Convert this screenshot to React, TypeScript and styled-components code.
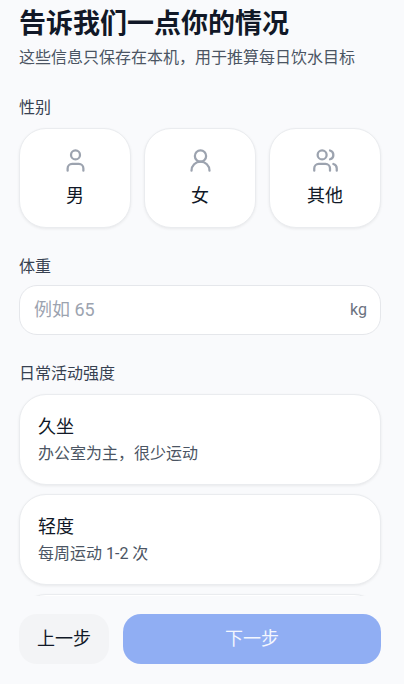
import React, { useState } from "react";
import styled, { createGlobalStyle } from "styled-components";
import { User, UserRound, Users } from "lucide-react";

const GlobalStyle = createGlobalStyle`
  * { box-sizing: border-box; }
  body {
    margin: 0;
    background: #f9fafc;
    color: #111827;
    font-family: Roboto, "Noto Sans CJK SC", sans-serif;
  }
  button, input { font-family: inherit; color: inherit; }
  h1, p, fieldset { margin: 0; padding: 0; border: 0; min-width: 0; }
`;

const Page = styled.div`
  display: flex;
  flex-direction: column;
  height: 100vh;
`;

const Content = styled.main`
  flex: 1;
  min-height: 0;
  overflow-y: auto;
  scrollbar-width: none;
  display: flex;
  flex-direction: column;
  gap: 28px;
  padding: 6px 23px 18px 19px;
`;

const Title = styled.h1`
  font-size: 27px;
  line-height: 36px;
  font-weight: 700;
`;

const Subtitle = styled.p`
  margin-top: 5px;
  font-size: 16px;
  line-height: 22px;
  color: #4b5563;
`;

const Caption = styled.legend`
  display: block;
  padding: 0;
  margin-bottom: 9px;
  font-size: 16px;
  line-height: 22px;
  color: #374151;
`;

const FieldLabel = styled.label`
  display: block;
  margin-bottom: 7px;
  font-size: 16px;
  line-height: 22px;
  color: #374151;
`;

const GenderGrid = styled.div`
  display: grid;
  grid-template-columns: repeat(3, 1fr);
  gap: 13px;
`;

const Card = styled.button<{ $selected: boolean }>`
  border: 1px solid ${(p) => (p.$selected ? "#2563eb" : "#eaecef")};
  border-radius: 27px;
  background: #fff;
  box-shadow: 0 1px 3px rgba(0, 0, 0, 0.07);
  padding: 18px;
  cursor: pointer;
`;

const GenderCard = styled(Card)`
  display: flex;
  flex-direction: column;
  align-items: center;
  gap: 9px;
  font-size: 18px;
  line-height: 26px;

  svg { color: #9ca3af; }
`;

const InputBox = styled.div`
  display: flex;
  align-items: center;
  height: 50px;
  padding: 0 13px 0 14px;
  border: 1px solid #e5e7eb;
  border-radius: 18px;
  background: #fff;
`;

const WeightInput = styled.input`
  flex: 1;
  min-width: 0;
  padding: 0;
  border: 0;
  outline: 0;
  background: transparent;
  font-size: 18px;
  line-height: 26px;

  &::placeholder { color: #9ca3af; opacity: 1; }
`;

const Unit = styled.span`
  font-size: 16px;
  line-height: 22px;
  color: #6b7280;
`;

const ActivityList = styled.div`
  display: flex;
  flex-direction: column;
  gap: 9px;
`;

const ActivityCard = styled(Card)`
  display: flex;
  flex-direction: column;
  gap: 2px;
  text-align: left;
`;

const ActivityName = styled.span`
  font-size: 18px;
  line-height: 27px;
`;

const ActivityNote = styled.span`
  font-size: 16px;
  line-height: 24px;
  color: #4b5563;
`;

const Footer = styled.footer`
  display: flex;
  gap: 14px;
  padding: 18px 23px 20px 19px;
`;

const ActionButton = styled.button<{ $primary?: boolean }>`
  flex: ${(p) => (p.$primary ? "1" : "none")};
  height: 50px;
  padding: 0 18px;
  border: 0;
  border-radius: 18px;
  font-size: 18px;
  line-height: 26px;
  background: ${(p) => (p.$primary ? "#90aef3" : "#f3f4f6")};
  color: ${(p) => (p.$primary ? "#f4f7fe" : "#111827")};
`;

const genders = [
  { name: "男", Icon: User },
  { name: "女", Icon: UserRound },
  { name: "其他", Icon: Users },
];

const activities = [
  { name: "久坐", note: "办公室为主，很少运动" },
  { name: "轻度", note: "每周运动 1-2 次" },
  { name: "中度", note: "每周运动 3-5 次" },
];

export default function App() {
  const [gender, setGender] = useState("");
  const [weight, setWeight] = useState("");
  const [activity, setActivity] = useState("");
  const ready = Boolean(gender && weight && activity);

  return (
    <Page>
      <GlobalStyle />
      <Content>
        <header>
          <Title>告诉我们一点你的情况</Title>
          <Subtitle>这些信息只保存在本机，用于推算每日饮水目标</Subtitle>
        </header>
        <fieldset>
          <Caption>性别</Caption>
          <GenderGrid>
            {genders.map(({ name, Icon }) => (
              <GenderCard
                key={name}
                type="button"
                $selected={gender === name}
                aria-pressed={gender === name}
                onClick={() => setGender(name)}
              >
                <Icon size={27} aria-hidden />
                <span>{name}</span>
              </GenderCard>
            ))}
          </GenderGrid>
        </fieldset>
        <div>
          <FieldLabel htmlFor="weight">体重</FieldLabel>
          <InputBox>
            <WeightInput
              id="weight"
              inputMode="decimal"
              placeholder="例如 65"
              value={weight}
              onChange={(e) => setWeight(e.target.value)}
            />
            <Unit>kg</Unit>
          </InputBox>
        </div>
        <fieldset>
          <Caption>日常活动强度</Caption>
          <ActivityList>
            {activities.map(({ name, note }) => (
              <ActivityCard
                key={name}
                type="button"
                $selected={activity === name}
                aria-pressed={activity === name}
                onClick={() => setActivity(name)}
              >
                <ActivityName>{name}</ActivityName>
                <ActivityNote>{note}</ActivityNote>
              </ActivityCard>
            ))}
          </ActivityList>
        </fieldset>
      </Content>
      <Footer>
        <ActionButton type="button">上一步</ActionButton>
        <ActionButton type="button" $primary disabled={!ready}>下一步</ActionButton>
      </Footer>
    </Page>
  );
}
